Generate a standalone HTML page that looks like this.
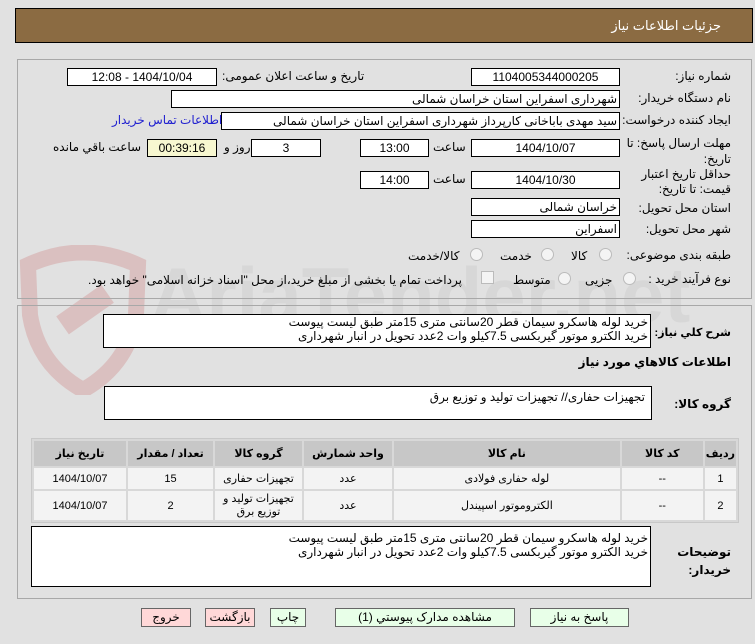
<!DOCTYPE html>
<html><head><meta charset="utf-8"><style>
body{margin:0;width:755px;height:644px;background:#e1e1e1;font-family:Tahoma,"Liberation Sans","DejaVu Sans",sans-serif;font-size:12px;color:#000;position:relative;overflow:hidden;direction:rtl}
.a{position:absolute;white-space:nowrap}
.box{position:absolute;background:#fff;border:1px solid #000;box-sizing:border-box;text-align:center;line-height:16px;font-size:12px;overflow:hidden}
.l{position:absolute;white-space:nowrap;font-size:12px}
.panel{position:absolute;border:1px solid #a8a8a8;box-sizing:border-box}
.rad{position:absolute;width:11px;height:11px;border:1px solid #bbb;border-radius:50%;background:#f4f4f4}
table{position:absolute;border-collapse:separate;border-spacing:2px;background:#d8d8d8;border:1px solid #c8c8c8;font-size:11px}
th{background:#c7c7c7;font-weight:bold;height:23px}
td{text-align:center;background:#f3f3f3}
.btn{position:absolute;top:608px;height:19px;border:1px solid #666;box-sizing:border-box;text-align:center;line-height:17px;font-size:12px}
</style></head><body>
<div class="a" style="left:15px;top:8px;width:738px;height:35px;background:#8b6b42;border:1px solid #000;box-sizing:border-box"></div>
<div class="a" style="right:34px;top:18px;color:#fff;font-size:13px">جزئیات اطلاعات نیاز</div>

<svg class="a" style="left:18px;top:245px;opacity:.18" width="130" height="150" viewBox="0 0 130 150"><path d="M10 20 Q65 -5 120 20 L118 70 Q110 120 65 145 Q20 120 12 70 Z" fill="none" stroke="#c03030" stroke-width="16"/><rect x="40" y="55" width="55" height="22" fill="#c03030" transform="rotate(-35 65 66)"/></svg>
<div class="a" style="left:150px;top:250px;font-size:78px;font-weight:bold;color:#bbb;opacity:.25;direction:ltr;font-family:'Liberation Sans',sans-serif">AriaTender.net</div>

<div class="panel" style="left:17px;top:59px;width:735px;height:240px"></div>
<div class="l" style="right:24px;top:69px">شماره نیاز:</div>
<div class="box" style="left:471px;top:68px;width:149px;height:18px">1104005344000205</div>
<div class="l" style="left:222px;top:69px">تاریخ و ساعت اعلان عمومی:</div>
<div class="box" style="left:67px;top:68px;width:150px;height:18px">1404/10/04 - 12:08</div>
<div class="l" style="right:24px;top:91px">نام دستگاه خریدار:</div>
<div class="box" style="left:171px;top:90px;width:449px;height:18px;text-align:right;padding-right:2px">شهرداری اسفراین استان خراسان شمالی</div>
<div class="l" style="right:24px;top:113px">ایجاد کننده درخواست:</div>
<div class="box" style="left:221px;top:112px;width:399px;height:18px;text-align:right;padding-right:2px">سید مهدی  باباخانی کارپرداز   شهرداری اسفراین استان خراسان شمالی</div>
<div class="l" style="left:112px;top:113px;color:#2020d0">اطلاعات تماس خریدار</div>
<div class="l" style="right:24px;top:135px;line-height:16px;text-align:right">مهلت ارسال پاسخ: تا<br>تاریخ:</div>
<div class="box" style="left:471px;top:139px;width:149px;height:18px">1404/10/07</div>
<div class="l" style="left:433px;top:140px">ساعت</div>
<div class="box" style="left:360px;top:139px;width:69px;height:18px">13:00</div>
<div class="box" style="left:251px;top:139px;width:70px;height:18px">3</div>
<div class="l" style="left:224px;top:140px">روز و</div>
<div class="box" style="left:147px;top:139px;width:70px;height:18px;background:#f7f7d0">00:39:16</div>
<div class="l" style="left:53px;top:140px">ساعت باقي مانده</div>
<div class="l" style="right:24px;top:167px;line-height:15px;text-align:right">حداقل تاریخ اعتبار<br>قیمت: تا تاریخ:</div>
<div class="box" style="left:471px;top:171px;width:149px;height:18px">1404/10/30</div>
<div class="l" style="left:433px;top:172px">ساعت</div>
<div class="box" style="left:360px;top:171px;width:69px;height:18px">14:00</div>
<div class="l" style="right:24px;top:201px">استان محل تحویل:</div>
<div class="box" style="left:471px;top:198px;width:149px;height:18px;text-align:right;padding-right:2px">خراسان شمالی</div>
<div class="l" style="right:24px;top:222px">شهر محل تحویل:</div>
<div class="box" style="left:471px;top:220px;width:149px;height:18px;text-align:right;padding-right:2px">اسفراین</div>
<div class="l" style="right:24px;top:248px">طبقه بندی موضوعی:</div>
<div class="rad" style="left:599px;top:248px"></div><div class="l" style="left:571px;top:249px">کالا</div>
<div class="rad" style="left:541px;top:248px"></div><div class="l" style="left:500px;top:249px">خدمت</div>
<div class="rad" style="left:470px;top:248px"></div><div class="l" style="left:408px;top:249px">کالا/خدمت</div>
<div class="l" style="right:24px;top:272px">نوع فرآیند خرید :</div>
<div class="rad" style="left:623px;top:272px"></div><div class="l" style="left:585px;top:273px">جزیی</div>
<div class="rad" style="left:558px;top:272px"></div><div class="l" style="left:513px;top:273px">متوسط</div>
<div class="a" style="left:481px;top:271px;width:11px;height:11px;border:1px solid #bbb;background:#f4f4f4"></div>
<div class="l" style="left:88px;top:273px">پرداخت تمام یا بخشی از مبلغ خرید،از محل "اسناد خزانه اسلامی" خواهد بود.</div>

<div class="panel" style="left:17px;top:305px;width:735px;height:294px"></div>
<div class="l" style="right:24px;top:326px;font-weight:bold;font-size:11px">شرح کلي نیاز:</div>
<div class="box" style="left:103px;top:314px;width:548px;height:34px;text-align:right;padding-right:2px;line-height:14px;white-space:normal">خرید لوله هاسکرو سیمان قطر 20سانتی متری 15متر طبق لیست پیوست<br>خرید الکترو موتور گیربکسی 7.5کیلو وات 2عدد تحویل در انبار شهرداری</div>
<div class="l" style="right:24px;top:355px;font-weight:bold">اطلاعات کالاهاي مورد نیاز</div>
<div class="l" style="right:24px;top:397px;font-weight:bold">گروه کالا:</div>
<div class="box" style="left:104px;top:386px;width:548px;height:34px;text-align:right;padding-right:6px;line-height:14px;padding-top:3px">تجهیزات حفاری// تجهیزات تولید و توزیع برق</div>

<table style="left:31px;top:438px;width:708px">
<tr><th style="width:26px">ردیف</th><th style="width:79px">کد کالا</th><th>نام کالا</th><th style="width:86px">واحد شمارش</th><th style="width:85px">گروه کالا</th><th style="width:83px">تعداد / مقدار</th><th style="width:90px">تاریخ نیاز</th></tr>
<tr style="height:21px"><td>1</td><td>--</td><td>لوله حفاری فولادی</td><td>عدد</td><td>تجهیزات حفاری</td><td>15</td><td>1404/10/07</td></tr>
<tr style="height:29px"><td>2</td><td>--</td><td>الکتروموتور اسپیندل</td><td>عدد</td><td style="line-height:13px">تجهیزات تولید و توزیع برق</td><td>2</td><td>1404/10/07</td></tr>
</table>

<div class="l" style="right:24px;top:543px;font-weight:bold;line-height:18px;text-align:right">توضیحات<br>خریدار:</div>
<div class="box" style="left:31px;top:526px;width:620px;height:61px;text-align:right;padding-right:2px;line-height:14px;padding-top:4px">خرید لوله هاسکرو سیمان قطر 20سانتی متری 15متر طبق لیست پیوست<br>خرید الکترو موتور گیربکسی 7.5کیلو وات 2عدد تحویل در انبار شهرداری</div>

<div class="btn" style="left:530px;width:99px;background:#e8ffe8">پاسخ به نیاز</div>
<div class="btn" style="left:335px;width:180px;background:#e8ffe8">مشاهده مدارک پیوستي (1)</div>
<div class="btn" style="left:270px;width:36px;background:#e8ffe8">چاپ</div>
<div class="btn" style="left:205px;width:50px;background:#ffd8d8">بازگشت</div>
<div class="btn" style="left:141px;width:50px;background:#ffd8d8">خروج</div>
</body></html>
